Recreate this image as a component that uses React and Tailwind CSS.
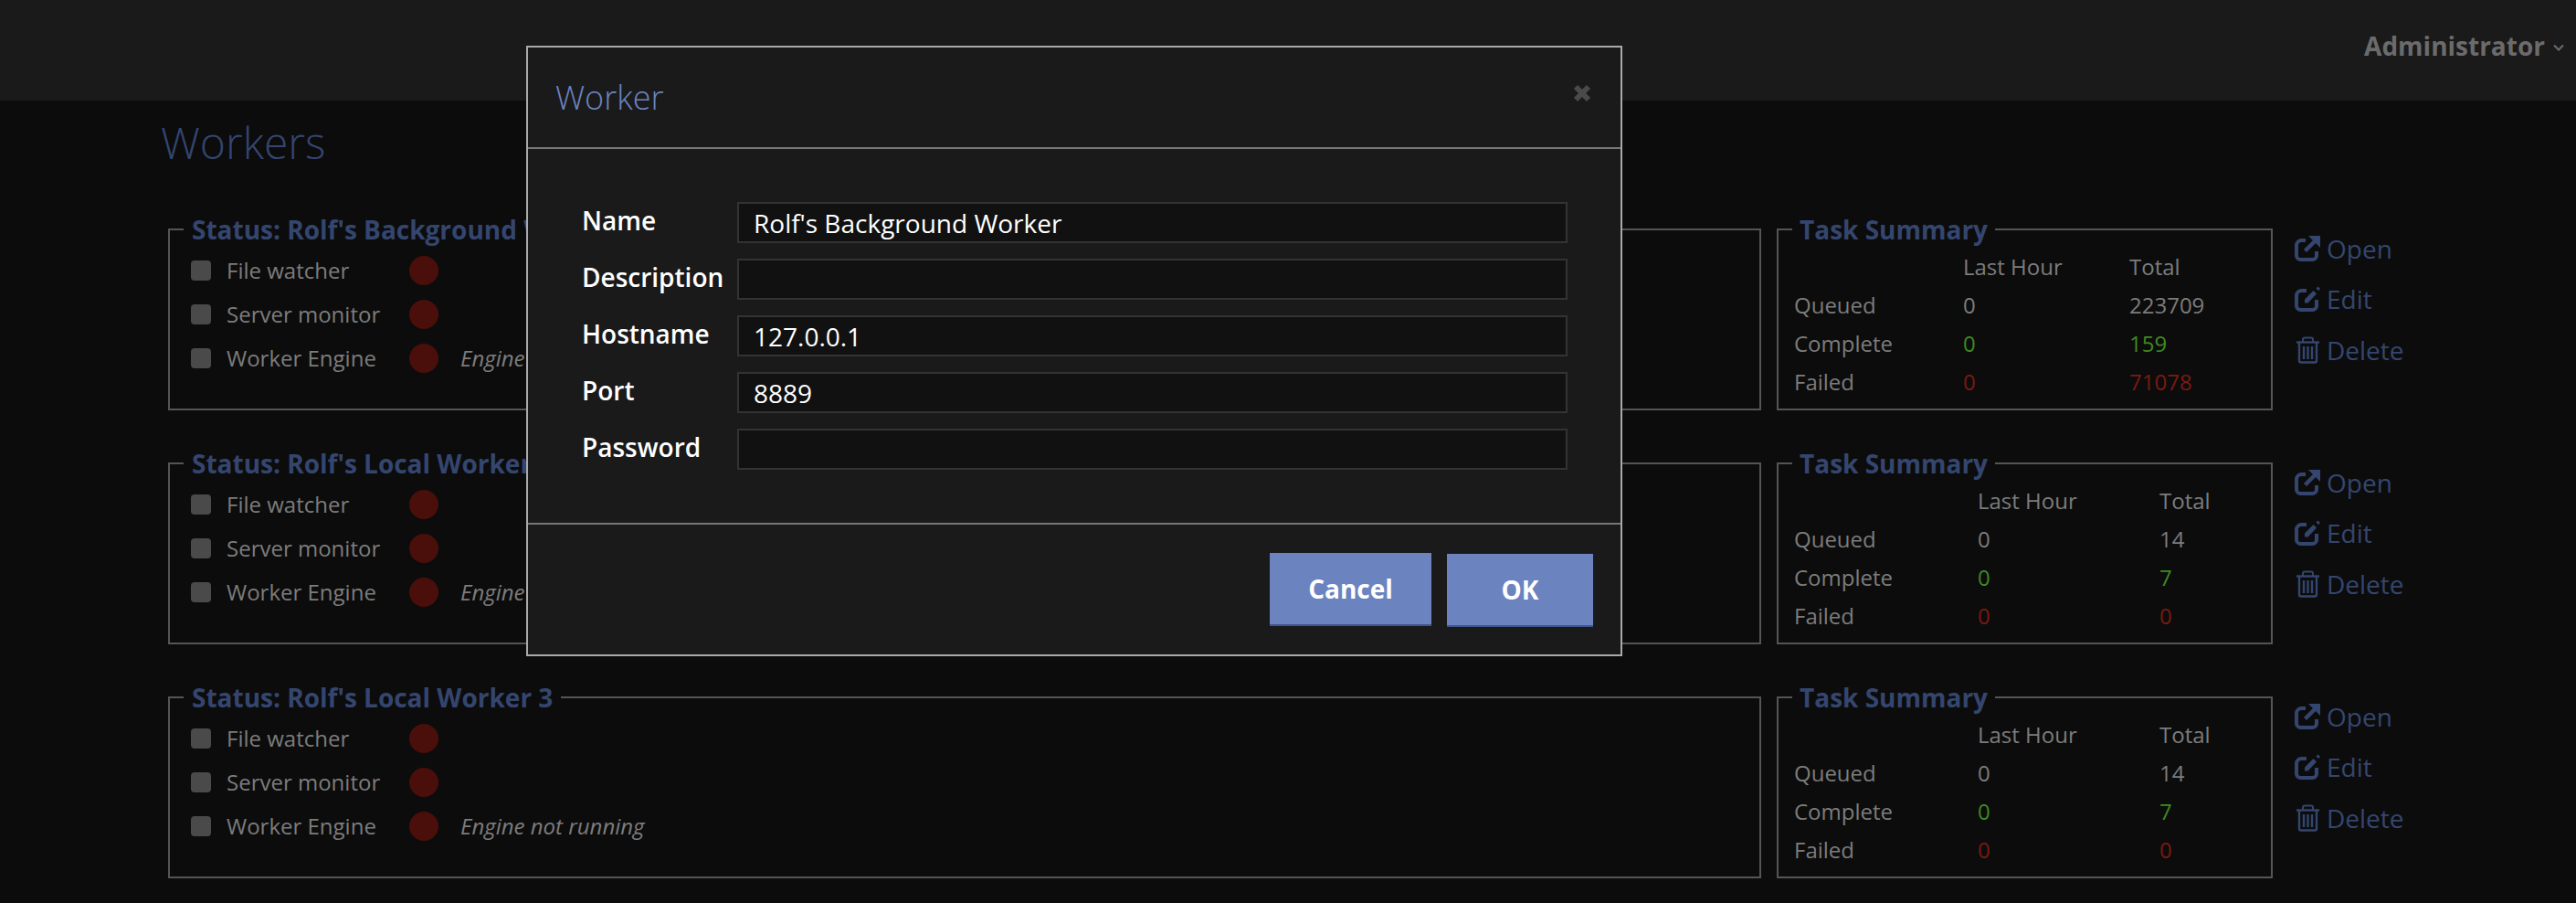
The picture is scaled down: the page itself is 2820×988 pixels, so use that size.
import React from 'react';

const workers = [
  { name: "Status: Rolf's Background Worker", cols: 'grid-cols-[185px_182px_1fr]', q: ['0', '223709'], c: ['0', '159'], f: ['0', '71078'] },
  { name: "Status: Rolf's Local Worker 2", cols: 'grid-cols-[201px_199px_1fr]', q: ['0', '14'], c: ['0', '7'], f: ['0', '0'] },
  { name: "Status: Rolf's Local Worker 3", cols: 'grid-cols-[201px_199px_1fr]', q: ['0', '14'], c: ['0', '7'], f: ['0', '0'] },
];

function OpenIcon() {
  return (
    <svg viewBox="0 0 28 28" className="h-7 w-7" fill="none" stroke="currentColor">
      <path d="M12 5H7.500A5.500 5.500 0 0 0 2 10.500v11A4.500 4.500 0 0 0 6.500 26h13a4.500 4.500 0 0 0 4.500-4.500V17" strokeWidth="4" />
      <path d="M11.500 16.500 22 6" strokeWidth="4.500" />
      <path d="M15 0H28V13Z" fill="currentColor" stroke="none" />
    </svg>
  );
}

function EditIcon() {
  return (
    <svg viewBox="0 0 28 28" className="h-7 w-7" fill="none" stroke="currentColor">
      <path d="M13 5H7.500A5.500 5.500 0 0 0 2 10.500v11A4.500 4.500 0 0 0 6.500 26h13a4.500 4.500 0 0 0 4.500-4.500V15" strokeWidth="4" />
      <path d="M11 18.500v-4L20.500 5l3.500 3.500L14.500 18.500Z" fill="currentColor" stroke="none" />
      <path d="M23.500 2.500l2-2 2.500 2.500-2 2Z" fill="currentColor" stroke="none" />
    </svg>
  );
}

function TrashIcon() {
  return (
    <svg viewBox="0 0 28 30" className="h-[30px] w-7" fill="none" stroke="currentColor" strokeWidth="2.400">
      <path d="M2 6.500h25" />
      <path d="M9 6V3.500A2 2 0 0 1 11 1.500h7a2 2 0 0 1 2 2V6" strokeWidth="2" />
      <path d="M5 7v19.500A2 2 0 0 0 7 28.500h15a2 2 0 0 0 2-2V7" />
      <path d="M10 11v14M14.500 11v14M19 11v14" />
    </svg>
  );
}

function StatusRow({ label, note }) {
  return (
    <div className="flex h-12 items-center">
      <span className="h-[22px] w-[22px] rounded-[4px] bg-[#4a4a4a]" />
      <span className="ml-[17px] w-[200px] text-[24px] text-[#7c7c7c]">{label}</span>
      <span className="h-8 w-8 rounded-full bg-[#4a0f0a]" />
      {note && <span className="ml-6 text-[24px] italic text-[#7c7c7c]">{note}</span>}
    </div>
  );
}

function Worker({ w }) {
  return (
    <div className="flex h-[212px]">
      <fieldset className="h-[212px] w-[1744px] min-w-0 border-2 border-[#555] pl-[23px] pr-4">
        <legend className="ml-[-8px] px-[9px] text-[28px] leading-[28px] font-bold text-[#34466f]">{w.name}</legend>
        <div className="mt-[7px]">
          <StatusRow label="File watcher" />
          <StatusRow label="Server monitor" />
          <StatusRow label="Worker Engine" note="Engine not running" />
        </div>
      </fieldset>
      <fieldset className="ml-[17px] h-[212px] w-[543px] min-w-0 border-2 border-[#555] pl-[17px]">
        <legend className="ml-[-2px] px-[8px] text-[28px] leading-[28px] font-bold text-[#34466f]">Task Summary</legend>
        <div className={`grid ${w.cols} mt-[6px] text-[24px] leading-[42px] text-[#7c7c7c]`}>
          <span /><span>Last Hour</span><span>Total</span>
          <span>Queued</span><span>{w.q[0]}</span><span>{w.q[1]}</span>
          <span>Complete</span><span className="text-[#3f8a1f]">{w.c[0]}</span><span className="text-[#3f8a1f]">{w.c[1]}</span>
          <span>Failed</span><span className="text-[#7a1a10]">{w.f[0]}</span><span className="text-[#7a1a10]">{w.f[1]}</span>
        </div>
      </fieldset>
      <div className="ml-[24px] flex flex-col text-[28px] text-[#34466f]">
        <a className="mt-[-3px] flex h-[55.5px] items-center gap-[7px] pt-5"><OpenIcon />Open</a>
        <a className="flex h-[55.5px] items-center gap-[7px] pt-5"><EditIcon />Edit</a>
        <a className="flex h-[55.5px] items-center gap-[7px] pt-5"><TrashIcon />Delete</a>
      </div>
    </div>
  );
}

function Field({ label, value }) {
  return (
    <div className="flex h-[45px] items-center">
      <label className="w-[170px] -translate-y-[3px] text-[28px] font-semibold text-white">{label}</label>
      <input readOnly value={value} className="h-[45px] w-[909px] border-2 border-[#333] bg-[#111] px-4 text-[28px] text-white outline-none" />
    </div>
  );
}

export default function App() {
  return (
    <div className="relative h-[988px] overflow-hidden bg-[#0c0c0c] font-['Open_Sans',sans-serif]">
      <header className="flex h-[110px] items-center justify-end bg-[#1a1a1a] pb-[10px] pr-[13px]">
        <span className="text-[28px] font-bold text-[#6b6b6b]">Administrator</span>
        <svg viewBox="0 0 12 8" className="ml-[9px] mt-[4px] h-2 w-3 text-[#6b6b6b]" fill="none" stroke="currentColor" strokeWidth="2"><path d="M1 1.500l5 5 5-5" /></svg>
      </header>
      <main className="pl-[184px]">
        <h1 className="ml-[-8px] mt-[8px] h-[75px] text-[48px] leading-[75px] font-light text-[#34466f]">Workers</h1>
        <div className="mt-[44px] flex flex-col gap-[44px]">
          {workers.map((w) => <Worker key={w.name} w={w} />)}
        </div>
      </main>
      <div className="absolute left-[576px] top-[50px] flex h-[668px] w-[1200px] flex-col border-2 border-[#aaa] bg-[#1a1a1a]">
        <div className="flex h-[111px] items-center justify-between border-b-2 border-[#777] pl-[30px] pr-[32px]">
          <span className="text-[36px] font-light text-[#6b84c0]">Worker</span>
          <svg viewBox="0 0 20 20" className="mb-[9px] h-5 w-5 text-[#4a4a4a]" fill="none" stroke="currentColor" strokeWidth="6"><path d="M3 3l14 14M17 3L3 17" /></svg>
        </div>
        <div className="flex h-[411px] flex-col gap-[17px] border-b-2 border-[#777] pl-[59px] pt-[58px]">
          <Field label="Name" value="Rolf's Background Worker" />
          <Field label="Description" value="" />
          <Field label="Hostname" value="127.0.0.1" />
          <Field label="Port" value="8889" />
          <Field label="Password" value="" />
        </div>
        <div className="flex flex-1 items-start justify-end gap-[17px] pr-[30px] pt-[31px]">
          <button className="h-[80px] w-[177px] border-b-2 border-[#3f5590] bg-[#6b84c0] text-[28px] font-bold text-white">Cancel</button>
          <button className="mt-[1px] h-[80px] w-[160px] border-b-2 border-[#3f5590] bg-[#6b84c0] text-[28px] font-bold text-white">OK</button>
        </div>
      </div>
    </div>
  );
}
